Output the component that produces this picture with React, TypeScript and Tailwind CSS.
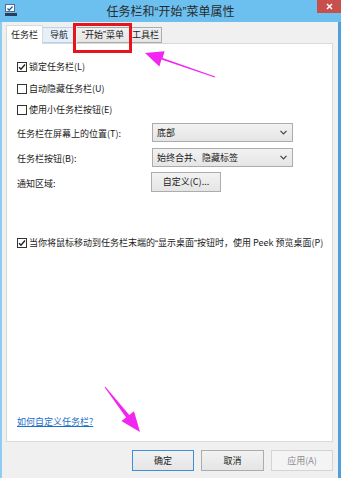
import React from 'react';

const font = { fontFamily: '"Noto Sans CJK SC", "Noto Sans", sans-serif' };

// quotes set in a latin face so they stay narrow like the original
function Q({ c }: { c: string }) {
  return <span className="font-['Liberation_Sans',sans-serif]">{c}</span>;
}

function CheckBox({ checked }: { checked?: boolean }) {
  return (
    <div className="w-[10px] h-[10px] border border-[#333] bg-white flex items-center justify-center shrink-0">
      {checked && (
        <svg width="8" height="8" viewBox="0 0 8 8">
          <path d="M1 4.2 L3 6.3 L7 1.5" fill="none" stroke="#222" strokeWidth="1.4" />
        </svg>
      )}
    </div>
  );
}

function Select({ value }: { value: string }) {
  return (
    <div className="w-[141px] h-[19px] border border-[#acacac] bg-gradient-to-b from-[#f2f2f2] to-[#e5e5e5] flex items-center justify-between pl-[4px] pr-[5px]">
      <span>{value}</span>
      <svg width="7" height="5" viewBox="0 0 7 5">
        <path d="M0.5 0.8 L3.5 3.8 L6.5 0.8" fill="none" stroke="#444" strokeWidth="1.2" />
      </svg>
    </div>
  );
}

export default function App() {
  const tabBase = 'h-[16px] border border-l-0 flex items-center justify-center whitespace-nowrap';

  return (
    <div className="w-[341px] h-[478px] relative flex flex-col bg-[#f0f0f0] text-[9px] text-[#1a1a1a] overflow-hidden whitespace-nowrap" style={font}>
      {/* title bar */}
      <div className="h-[22px] bg-[#6cc0ef] flex items-start relative shrink-0">
        <div className="w-[12px] h-[12px] ml-[5px] mt-[4px] flex flex-col">
          <div className="w-[10px] h-[8px] bg-white border border-[#4a6f9a] flex items-center justify-center">
            <svg width="6" height="5" viewBox="0 0 6 5">
              <path d="M0.5 2.5 L2.2 4.2 L5.5 0.5" fill="none" stroke="#1b4f9a" strokeWidth="1.2" />
            </svg>
          </div>
          <div className="w-[12px] h-[3px] mt-[1px] bg-[#2c3e55]" />
        </div>
        <div className="flex-1 text-center text-[12px] leading-[22px] text-[#2a2a2a] pl-[7px]">
          任务栏和<Q c="“" />开始<Q c="”" />菜单属性
        </div>
        <div className="w-[24px] h-[13px] bg-[#c7504d] flex items-center justify-center">
          <svg width="7" height="7" viewBox="0 0 7 7">
            <path d="M1 1 L6 6 M6 1 L1 6" stroke="white" strokeWidth="1.5" />
          </svg>
        </div>
      </div>

      {/* body */}
      <div className="flex-1 flex flex-col border-l-2 border-l-[#8fcdf0] border-r-[3px] border-r-[#4f9fdc] pl-[4px] pr-[5px]">
        <div className="h-[18px] mt-[3px] flex items-end">
          <div className="w-[37px] h-[19px] -mb-px z-10 bg-white border border-b-0 border-[#d9d9d9] flex items-center justify-center">任务栏</div>
          <div className={`w-[33px] bg-[#e6f0fa] border-[#b9d3ec] ${tabBase}`}>导航</div>
          <div className={`w-[53px] ml-[1px] bg-gradient-to-b from-[#f0f0f0] to-[#e5e5e5] border-[#acacac] border-l ${tabBase}`}>
            <Q c="“" />开始<Q c="”" />菜单
          </div>
          <div className={`w-[32px] bg-gradient-to-b from-[#f0f0f0] to-[#e5e5e5] border-[#acacac] ${tabBase}`}>工具栏</div>
        </div>

        <div className="h-[399px] bg-white border border-[#d9d9d9] flex flex-col pl-[10px]">
          <div className="h-[14px] mt-[16px] flex items-center gap-[2px]">
            <CheckBox checked />
            <span>锁定任务栏(L)</span>
          </div>
          <div className="h-[14px] mt-[8px] flex items-center gap-[2px]">
            <CheckBox />
            <span>自动隐藏任务栏(U)</span>
          </div>
          <div className="h-[14px] mt-[7px] flex items-center gap-[2px]">
            <CheckBox />
            <span>使用小任务栏按钮(E)</span>
          </div>

          <div className="mt-[6px] flex items-center">
            <span className="w-[135px] pt-[3px]">任务栏在屏幕上的位置(T):</span>
            <Select value="底部" />
          </div>
          <div className="mt-[6px] flex items-center">
            <span className="w-[135px] pt-[3px]">任务栏按钮(B):</span>
            <Select value="始终合并、隐藏标签" />
          </div>
          <div className="mt-[5px] flex items-center">
            <span className="w-[134px] pt-[3px]">通知区域:</span>
            <div className="w-[70px] h-[20px] border border-[#acacac] bg-gradient-to-b from-[#f2f2f2] to-[#e5e5e5] flex items-center justify-center">
              自定义(C)...
            </div>
          </div>

          <div className="h-[14px] mt-[44px] flex items-center gap-[2px]">
            <CheckBox checked />
            <span>
              当你将鼠标移动到任务栏末端的<Q c="“" />显示桌面<Q c="”" />按钮时，使用 Peek 预览桌面(P)
            </span>
          </div>

          <div className="mt-auto mb-[12px] h-[14px] flex items-center">
            <span className="text-[#1e6fc8] underline">如何自定义任务栏?</span>
          </div>
        </div>

        <div className="mt-[8px] flex justify-end gap-[7px]">
          <div className="w-[62px] h-[21px] border border-[#3c8fd8] bg-gradient-to-b from-[#f2f2f2] to-[#e5e5e5] flex items-center justify-center">确定</div>
          <div className="w-[63px] h-[21px] border border-[#acacac] bg-gradient-to-b from-[#f2f2f2] to-[#e5e5e5] flex items-center justify-center">取消</div>
          <div className="w-[62px] h-[21px] border border-[#d4d4d4] bg-[#f4f4f4] text-[#8c8c8c] flex items-center justify-center">应用(A)</div>
        </div>
      </div>

      {/* annotations */}
      <div className="absolute left-[73px] top-[23px] w-[59px] h-[30px] border-[3px] border-[#e8141c]" />
      <svg className="absolute left-0 top-0 pointer-events-none" width="341" height="478">
        <polygon
          fill="#f325f0"
          points="215.2,76.5 162.6,58.1 164.6,51.2 145,53 159.4,66.4 161.4,59.5 214.8,77.5"
        />
        <polygon
          fill="#f325f0"
          points="104.6,387.3 126.1,417.4 121.4,421.1 140,432 134,411.3 129.3,415 105.4,386.7"
        />
      </svg>
    </div>
  );
}
